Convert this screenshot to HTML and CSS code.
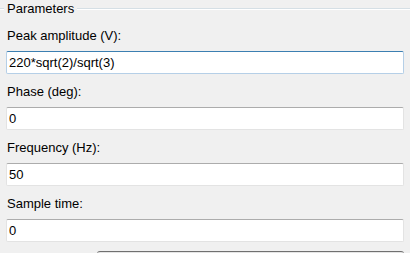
FILE: index.html
```html
<!DOCTYPE html>
<html lang="en">
<head>
    <meta charset="UTF-8">
    <title>Block Parameters</title>
    <link rel="stylesheet" href="styles.css">
</head>
<body>
    <div class="group">
        <div class="group-head">
            <span class="stub"></span>
            <span class="legend">Parameters</span>
            <span class="line"></span>
        </div>
        <div class="field">
            <label class="label">Peak amplitude (V):</label>
            <input class="box focused" type="text" value="220*sqrt(2)/sqrt(3)">
        </div>
        <div class="field">
            <label class="label">Phase (deg):</label>
            <input class="box" type="text" value="0">
        </div>
        <div class="field">
            <label class="label">Frequency (Hz):</label>
            <input class="box" type="text" value="50">
        </div>
        <div class="field">
            <label class="label">Sample time:</label>
            <input class="box" type="text" value="0">
        </div>
    </div>
    <div class="footer">
        <div class="button-bar"></div>
    </div>
</body>
</html>
```

FILE: styles.css
```css
body {
    margin: 0;
    background: #f0f0f0;
    font-family: "Liberation Sans", Arial, sans-serif;
    font-size: 13px;
    color: #000;
    overflow: hidden;
}
.group {
    padding: 0 6px 0 6px;
}
.group-head {
    display: flex;
    align-items: center;
    height: 18px;
    margin: 0 -6px;
}
.stub {
    width: 4px;
    height: 0;
    border-top: 1px solid #d5dfe5;
    border-bottom: 1px solid #fff;
}
.legend {
    padding: 0 3px;
    line-height: 18px;
}
.line {
    flex: 1;
    height: 0;
    border-top: 1px solid #d5dfe5;
    border-bottom: 1px solid #fff;
}
.field {
    display: flex;
    flex-direction: column;
}
.label {
    display: block;
    padding: 10px 0 7px 1px;
    line-height: 16px;
}
.box {
    display: block;
    box-sizing: border-box;
    width: 100%;
    height: 23px;
    margin: 0;
    padding: 0 2px;
    font-family: inherit;
    font-size: 13px;
    color: #000;
    background: #fff;
    border: 1px solid #e3e3e3;
    border-top-color: #acacac;
    border-radius: 2px;
    outline: none;
}
.box.focused {
    border-color: #b5cfe7;
    border-top-color: #3c7fb1;
}
.footer {
    display: flex;
    justify-content: flex-end;
    padding: 9px 6px 0 97px;
}
.button-bar {
    flex: 1;
    height: 23px;
    background: #e5e5e5;
    border-top: 1px solid #707070;
    border-radius: 3px 3px 0 0;
}
```
